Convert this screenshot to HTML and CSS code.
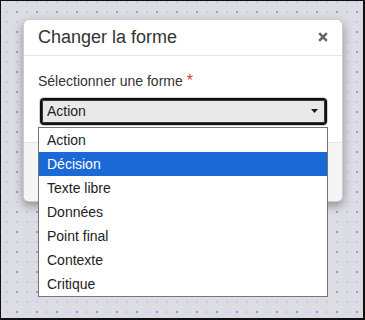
FILE: index.html
```html
<!DOCTYPE html>
<html lang="fr">
<head>
<meta charset="utf-8">
<title>Changer la forme</title>
<link rel="stylesheet" href="styles.css">
</head>
<body>
<div class="canvas">
  <div class="modal">
    <div class="modal-header">
      <h4 class="modal-title">Changer la forme</h4>
      <span class="close" aria-label="Fermer">
        <svg width="10" height="10" viewBox="0 0 10 10"><path d="M1.2 1.2 L8.8 8.8 M8.8 1.2 L1.2 8.8" stroke="#666" stroke-width="2.6" stroke-linecap="butt"/></svg>
      </span>
    </div>
    <div class="modal-body">
      <label class="field-label">Sélectionner une forme <span class="req">*</span></label>
      <div class="select-wrap">
        <div class="select">
          <span class="select-value">Action</span>
          <svg class="caret" width="7" height="4" viewBox="0 0 7 4"><polygon points="0,0 7,0 3.5,4" fill="#1a1a1a"/></svg>
        </div>
        <ul class="listbox">
          <li class="option">Action</li>
          <li class="option selected">Décision</li>
          <li class="option">Texte libre</li>
          <li class="option">Données</li>
          <li class="option">Point final</li>
          <li class="option">Contexte</li>
          <li class="option">Critique</li>
        </ul>
      </div>
    </div>
    <div class="modal-footer"></div>
  </div>
</div>
</body>
</html>
```

FILE: styles.css
```css
html, body {
  margin: 0;
  padding: 0;
}

body {
  font-family: "Liberation Sans", Arial, sans-serif;
  color: #333;
}

.canvas {
  box-sizing: border-box;
  width: 365px;
  height: 320px;
  border-style: solid;
  border-color: #111;
  border-width: 1px 2px 2px 1px;
  padding: 18px 0 0 22px;
  background-color: #dcdce5;
  background-origin: border-box;
  background-image:
    conic-gradient(from 270deg at 2px 2px, #969dd2 25%, transparent 0),
    conic-gradient(from 270deg at 2px 2px, #c9cbe0 25%, transparent 0);
  background-size: 20px 20px, 10px 10px;
  background-position: 16px 11px, 6px 1px;
}

.modal {
  width: 320px;
  box-sizing: border-box;
  background: #fff;
  border: 1px solid rgba(0, 0, 0, 0.2);
  border-radius: 6px;
  box-shadow: 0 4px 10px rgba(0, 0, 0, 0.35);
}

.modal-header {
  display: flex;
  align-items: center;
  justify-content: space-between;
  padding: 7px 14px 8px 14px;
  border-bottom: 1px solid #e5e5e5;
}

.modal-title {
  margin: 0;
  font-size: 18px;
  font-weight: normal;
  line-height: 20px;
  color: #333;
}

.close {
  display: flex;
  width: 10px;
  height: 10px;
}

.modal-body {
  padding: 15px 14px 17px 14px;
}

.field-label {
  display: block;
  font-size: 14px;
  line-height: 20px;
  color: #333;
}

.req {
  color: #e53935;
  font-size: 16px;
}

.select-wrap {
  position: relative;
  margin: 7px 0 0 2px;
  width: 287px;
}

.select {
  box-sizing: border-box;
  height: 27px;
  display: flex;
  align-items: center;
  padding: 0 7px 1px 5px;
  border: 2px solid #101010;
  border-radius: 4px;
  background: #e9e9e9;
  box-shadow: 0 0 0 1px #d2d2d2, inset 0 0 0 1px #3a3a3a;
  font-size: 14px;
  color: #222;
}

.select-value {
  flex: 1;
}

.caret {
  display: block;
}

.listbox {
  position: absolute;
  top: 29px;
  left: -2px;
  box-sizing: border-box;
  width: 290px;
  margin: 0;
  padding: 0;
  list-style: none;
  background: #fff;
  border: 1px solid #767676;
  z-index: 5;
}

.option {
  height: 24px;
  line-height: 24px;
  padding-left: 8px;
  font-size: 14px;
  color: #222;
}

.option.selected {
  background: #1a69d6;
  color: #fff;
}

.modal-footer {
  height: 58px;
  background: #f5f5f5;
  border-top: 1px solid #e5e5e5;
  border-radius: 0 0 5px 5px;
}
```
